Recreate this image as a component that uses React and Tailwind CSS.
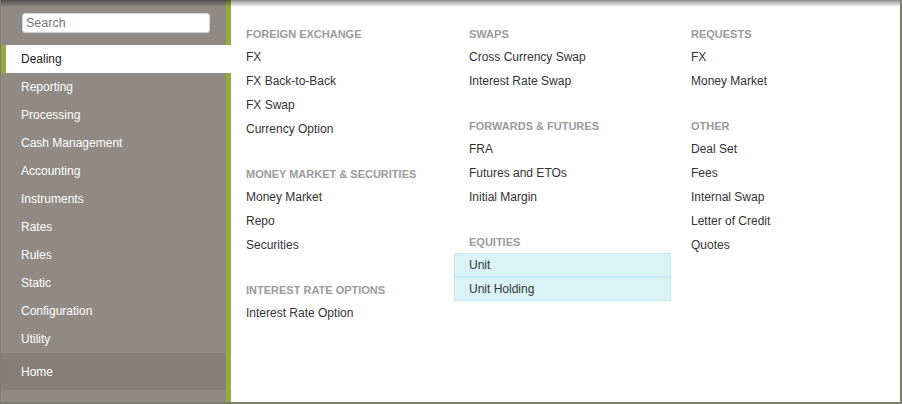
import React from "react";

const navItems = [
  "Dealing",
  "Reporting",
  "Processing",
  "Cash Management",
  "Accounting",
  "Instruments",
  "Rates",
  "Rules",
  "Static",
  "Configuration",
  "Utility",
];

const columns = [
  {
    w: "w-[223px]",
    groups: [
      { title: "FOREIGN EXCHANGE", items: ["FX", "FX Back-to-Back", "FX Swap", "Currency Option"] },
      { title: "MONEY MARKET & SECURITIES", items: ["Money Market", "Repo", "Securities"] },
      { title: "INTEREST RATE OPTIONS", items: ["Interest Rate Option"] },
    ],
  },
  {
    w: "w-[222px]",
    groups: [
      { title: "SWAPS", items: ["Cross Currency Swap", "Interest Rate Swap"] },
      { title: "FORWARDS & FUTURES", items: ["FRA", "Futures and ETOs", "Initial Margin"] },
      { title: "EQUITIES", items: ["Unit", "Unit Holding"], highlight: true },
    ],
  },
  {
    w: "w-[222px]",
    groups: [
      { title: "REQUESTS", items: ["FX", "Money Market"] },
      { title: "OTHER", items: ["Deal Set", "Fees", "Internal Swap", "Letter of Credit", "Quotes"] },
    ],
  },
];

export default function App() {
  return (
    <div className="relative flex w-[902px] h-[404px] overflow-hidden bg-white border-l border-r-2 border-b-2 border-[#7d7f6d] font-['Liberation_Sans',Arial,sans-serif]">
      {/* Sidebar */}
      <div className="flex flex-col w-[230px] shrink-0 bg-[#8f8b84] shadow-[inset_-5px_0_0_#98a93f]">
        <div className="pt-[13px] pl-[21px] pb-[12px]">
          <input
            type="text"
            placeholder="Search"
            className="block w-[188px] h-[20px] rounded-[3px] bg-white border border-[#d4d4d4] px-[3px] text-[12.5px] text-[#333] placeholder:text-[#777] outline-none"
          />
        </div>
        {navItems.map((item, i) =>
          i === 0 ? (
            <div
              key={item}
              className="h-[28px] flex items-center bg-white border-l-[5px] border-[#98a93f] pl-[15px] text-[12px] text-[#222]"
            >
              {item}
            </div>
          ) : (
            <div key={item} className="h-[28px] flex items-center pl-[20px] text-[12px] text-white">
              {item}
            </div>
          )
        )}
        <div className="h-[37px] mr-[5px] flex items-center pl-[20px] bg-[#847f78] text-[12px] text-white">
          Home
        </div>
        <div className="flex-1" />
      </div>

      {/* Content */}
      <div className="flex-1 flex pt-[23px]">
        {columns.map((col, ci) => (
          <div key={ci} className={`${col.w} flex flex-col gap-[22px]`}>
            {col.groups.map((group) => (
              <div key={group.title} className="flex flex-col">
                <div className="h-[22px] flex items-center pl-[15px] text-[11px] font-bold text-[#9b9b9b]">
                  {group.title}
                </div>
                {group.items.map((it) =>
                  group.highlight ? (
                    <div
                      key={it}
                      className="h-[24px] mr-[5px] flex items-center pl-[14px] text-[12px] text-[#333] bg-[#d9f3f7] border border-[#c2e9f0]"
                    >
                      {it}
                    </div>
                  ) : (
                    <div key={it} className="h-[24px] mr-[5px] flex items-center pl-[15px] text-[12px] text-[#333]">
                      {it}
                    </div>
                  )
                )}
              </div>
            ))}
          </div>
        ))}
      </div>

      {/* top shadow */}
      <div className="pointer-events-none absolute inset-x-0 top-0 h-[7px] bg-linear-to-b from-[rgba(0,0,0,0.45)] to-transparent" />
    </div>
  );
}
